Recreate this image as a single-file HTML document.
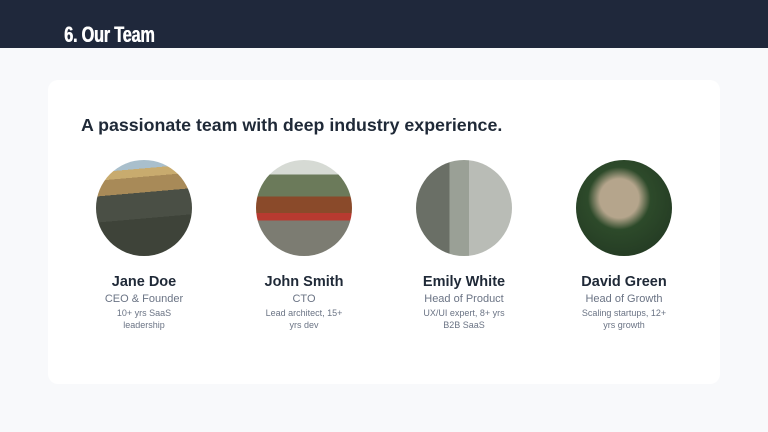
<!DOCTYPE html>
<html><head><meta charset="utf-8"><style>
*{margin:0;padding:0;box-sizing:border-box}
body{width:768px;height:432px;background:#f8f9fb;font-family:"Liberation Sans",sans-serif;position:relative;overflow:hidden}
.hdr{position:absolute;left:0;top:0;width:768px;height:48px;background:#1f283b}
.hdr h1{position:absolute;left:64px;top:23px;color:#fff;font-size:22px;font-weight:bold;font-family:"Liberation Sans",sans-serif;transform:scaleX(.74);transform-origin:left;letter-spacing:-0.3px;line-height:24px;text-shadow:0.6px 0 0 #fff}
.card{position:absolute;left:48px;top:80px;width:672px;height:304px;background:#fff;border-radius:10px}
.card h2{position:absolute;left:33px;top:34px;font-size:17.8px;font-weight:bold;color:#1f2937;line-height:22px}
.m{position:absolute;top:80px;width:130px;text-align:center}
.av{width:96px;height:96px;border-radius:50%;margin:0 auto;overflow:hidden}
.n{margin-top:17px;font-size:14.5px;font-weight:bold;color:#1f2937;line-height:18px}
.r{font-size:11px;color:#6b7485;line-height:14px;margin-top:1px}
.d{font-size:9px;color:#6b7485;line-height:12px;width:90px;margin:1px auto 0}
</style></head><body>
<div class="hdr"><h1>6. Our Team</h1></div>
<div class="card">
<h2>A passionate team with deep industry experience.</h2>
<div class="m" style="left:31px"><div class="av" style="background:linear-gradient(175deg,#a9bfcc 0 12%,#c8ab6e 12% 20%,#a88a58 20% 35%,#4a4f45 35% 60%,#3e4339 60% 100%)"></div><div class="n">Jane Doe</div><div class="r">CEO &amp; Founder</div><div class="d" style="width:80px">10+ yrs SaaS leadership</div></div>
<div class="m" style="left:191px"><div class="av" style="background:linear-gradient(180deg,#d6dad4 0 15%,#6b7a5a 15% 38%,#8a4a2a 38% 55%,#b83a30 55% 63%,#7c7c72 63% 100%)"></div><div class="n">John Smith</div><div class="r">CTO</div><div class="d">Lead architect, 15+ yrs dev</div></div>
<div class="m" style="left:351px"><div class="av" style="background:linear-gradient(90deg,#6a6f66 0 35%,#9aa096 35% 55%,#b9bcb6 55% 100%)"></div><div class="n">Emily White</div><div class="r">Head of Product</div><div class="d">UX/UI expert, 8+ yrs B2B SaaS</div></div>
<div class="m" style="left:511px"><div class="av" style="background:radial-gradient(circle at 45% 40%,#b5a58c 0 25%,#2d4a2a 40%,#1f3320 100%)"></div><div class="n">David Green</div><div class="r">Head of Growth</div><div class="d">Scaling startups, 12+ yrs growth</div></div>
</div>
</body></html>
